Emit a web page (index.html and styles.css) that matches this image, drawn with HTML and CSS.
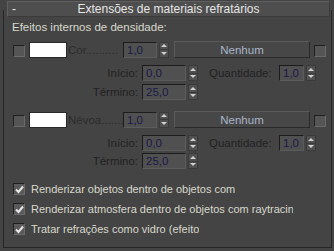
FILE: index.html
```html
<!DOCTYPE html>
<html>
<head>
<meta charset="utf-8">
<link rel="stylesheet" href="styles.css">
</head>
<body>
<div class="rollout">
  <div class="title"><span class="minus">-</span><span class="ttl">Extensões de materiais refratários</span></div>
  <div class="panel">
    <div class="section-label">Efeitos internos de densidade:</div>

    <div class="row main">
      <span class="cb"></span>
      <span class="swatch"></span>
      <span class="dots">Cor..........</span>
      <span class="spin s-main"><span class="field">1,0</span><span class="arrows"><i class="up"></i><i class="dn"></i></span></span>
      <span class="btn">Nenhum</span>
      <span class="cb"></span>
    </div>
    <div class="row sub first">
      <span class="lbl">Início:</span>
      <span class="spin s-sub"><span class="field">0,0</span><span class="arrows"><i class="up"></i><i class="dn"></i></span></span>
      <span class="lbl q">Quantidade:</span>
      <span class="spin s-q"><span class="field">1,0</span><span class="arrows"><i class="up"></i><i class="dn"></i></span></span>
    </div>
    <div class="row sub">
      <span class="lbl">Término:</span>
      <span class="spin s-sub"><span class="field">25,0</span><span class="arrows"><i class="up"></i><i class="dn"></i></span></span>
    </div>

    <div class="row main second">
      <span class="cb"></span>
      <span class="swatch"></span>
      <span class="dots">Névoa.......</span>
      <span class="spin s-main"><span class="field">1,0</span><span class="arrows"><i class="up"></i><i class="dn"></i></span></span>
      <span class="btn">Nenhum</span>
      <span class="cb"></span>
    </div>
    <div class="row sub first">
      <span class="lbl">Início:</span>
      <span class="spin s-sub"><span class="field">0,0</span><span class="arrows"><i class="up"></i><i class="dn"></i></span></span>
      <span class="lbl q">Quantidade:</span>
      <span class="spin s-q"><span class="field">1,0</span><span class="arrows"><i class="up"></i><i class="dn"></i></span></span>
    </div>
    <div class="row sub tight">
      <span class="lbl">Término:</span>
      <span class="spin s-sub"><span class="field">25,0</span><span class="arrows"><i class="up"></i><i class="dn"></i></span></span>
    </div>

    <div class="checks">
      <div class="chk"><span class="cb on"><svg width="9" height="9" viewBox="0 0 9 9"><path d="M1 4.5 L3.5 7 L8 1.5" fill="none" stroke="#e8e8e8" stroke-width="2"/></svg></span><span class="txt">Renderizar objetos dentro de objetos com</span></div>
      <div class="chk"><span class="cb on"><svg width="9" height="9" viewBox="0 0 9 9"><path d="M1 4.5 L3.5 7 L8 1.5" fill="none" stroke="#e8e8e8" stroke-width="2"/></svg></span><span class="txt">Renderizar atmosfera dentro de objetos com raytracing</span></div>
      <div class="chk"><span class="cb on"><svg width="9" height="9" viewBox="0 0 9 9"><path d="M1 4.5 L3.5 7 L8 1.5" fill="none" stroke="#e8e8e8" stroke-width="2"/></svg></span><span class="txt">Tratar refrações como vidro (efeito</span></div>
    </div>
  </div>
</div>
</body>
</html>
```

FILE: styles.css
```css
html, body {
  margin: 0;
  padding: 0;
  background: #444444;
  width: 334px;
  height: 251px;
  overflow: hidden;
}
body {
  font-family: "Liberation Sans", Arial, sans-serif;
  font-size: 11px;
  color: #d8d8cc;
}
.rollout {
  padding-top: 1px;
  position: relative;
}
.title {
  position: relative;
  z-index: 1;
  margin: 0 4px 0 7px;
  height: 14px;
  background: #4e4e4e;
  border: 1px solid #5f5f5f;
  border-bottom-color: #3a3a3a;
  border-right-color: #3a3a3a;
  display: flex;
  align-items: center;
  color: #e6e6e6;
  font-size: 12px;
}
.minus {
  width: 10px;
  padding-left: 4px;
}
.ttl {
  flex: 1;
  text-align: center;
  padding-right: 14px;
}
.panel {
  margin: -7px 2px 0 3px;
  border: 1px solid #262626;
  border-top: none;
  height: 229px;
  padding: 8px 0 0 8px;
  box-sizing: content-box;
}
.section-label {
  margin-top: 2px;
  height: 14px;
  line-height: 14px;
  font-size: 11.5px;
}
.row {
  display: flex;
  align-items: center;
}
.row.main {
  margin-top: 7px;
  height: 17px;
}
.row.second {
  margin-top: 11px;
}
.cb {
  width: 10px;
  height: 10px;
  background: #555555;
  border: 1px solid #202020;
  border-right-color: #6a6a6a;
  border-bottom-color: #6a6a6a;
  flex: none;
  display: inline-flex;
  align-items: center;
  justify-content: center;
}
.row.main .cb:first-child {
  margin-left: 1px;
  margin-top: 2px;
}
.row.main .cb:last-child {
  margin-left: 4px;
  margin-top: 2px;
}
.swatch {
  height: 16px;
  margin-left: 4px;
  background: #ffffff;
  border: 1px solid #2a2a2a;
  box-sizing: border-box;
  width: 38px;
}
.dots {
  width: 55px;
  margin-left: 1px;
  color: #2c2c2c;
  white-space: nowrap;
  overflow: hidden;
  font-size: 11.5px;
}
.spin {
  display: inline-flex;
  align-items: stretch;
  height: 16px;
  flex: none;
}
.field {
  background: #505050;
  border: 1px solid #1c1c1c;
  border-right-color: #5c5c5c;
  border-bottom-color: #5c5c5c;
  color: #1a1a48;
  padding-left: 3px;
  line-height: 14px;
  box-sizing: border-box;
  font-size: 11.5px;
}
.s-main .field { width: 34px; }
.s-sub .field { width: 44px; }
.s-q .field { width: 25px; }
.arrows {
  width: 8px;
  margin-left: 2px;
  display: flex;
  flex-direction: column;
  background: #505050;
  border: 1px solid #3a3a3a;
}
.arrows i {
  flex: 1;
  display: flex;
  align-items: center;
  justify-content: center;
}
.arrows i.up { border-bottom: 1px solid #3a3a3a; }
.arrows i.up::after {
  content: "";
  border-left: 3px solid transparent;
  border-right: 3px solid transparent;
  border-bottom: 3px solid #d0d0d0;
}
.arrows i.dn::after {
  content: "";
  border-left: 3px solid transparent;
  border-right: 3px solid transparent;
  border-top: 3px solid #d0d0d0;
}
.btn {
  width: 136px;
  height: 17px;
  margin-left: 5px;
  box-sizing: border-box;
  border: 1px solid #2a2a2a;
  border-top-color: #5a5a5a;
  border-left-color: #5a5a5a;
  background: #474747;
  color: #a8b4c8;
  display: flex;
  align-items: center;
  justify-content: center;
  font-size: 11.5px;
}
.row.sub {
  height: 16px;
  margin-top: 3px;
}
.row.sub.first {
  margin-top: 7px;
}
.row.sub.tight {
  margin-top: 2px;
}
.lbl {
  width: 126px;
  text-align: right;
  padding-right: 4px;
  color: #222222;
  font-size: 11.5px;
}
.lbl.q {
  padding-right: 0;
  margin-left: 11px;
  width: 70px;
  text-align: left;
}
.checks {
  margin-top: 10px;
}
.chk {
  display: flex;
  align-items: center;
  height: 20px;
  white-space: nowrap;
}
.chk .cb {
  margin-left: 1px;
  margin-right: 6px;
  background: #5a5a5a;
}
.chk .txt {
  max-width: 262px;
  overflow: hidden;
}
```
